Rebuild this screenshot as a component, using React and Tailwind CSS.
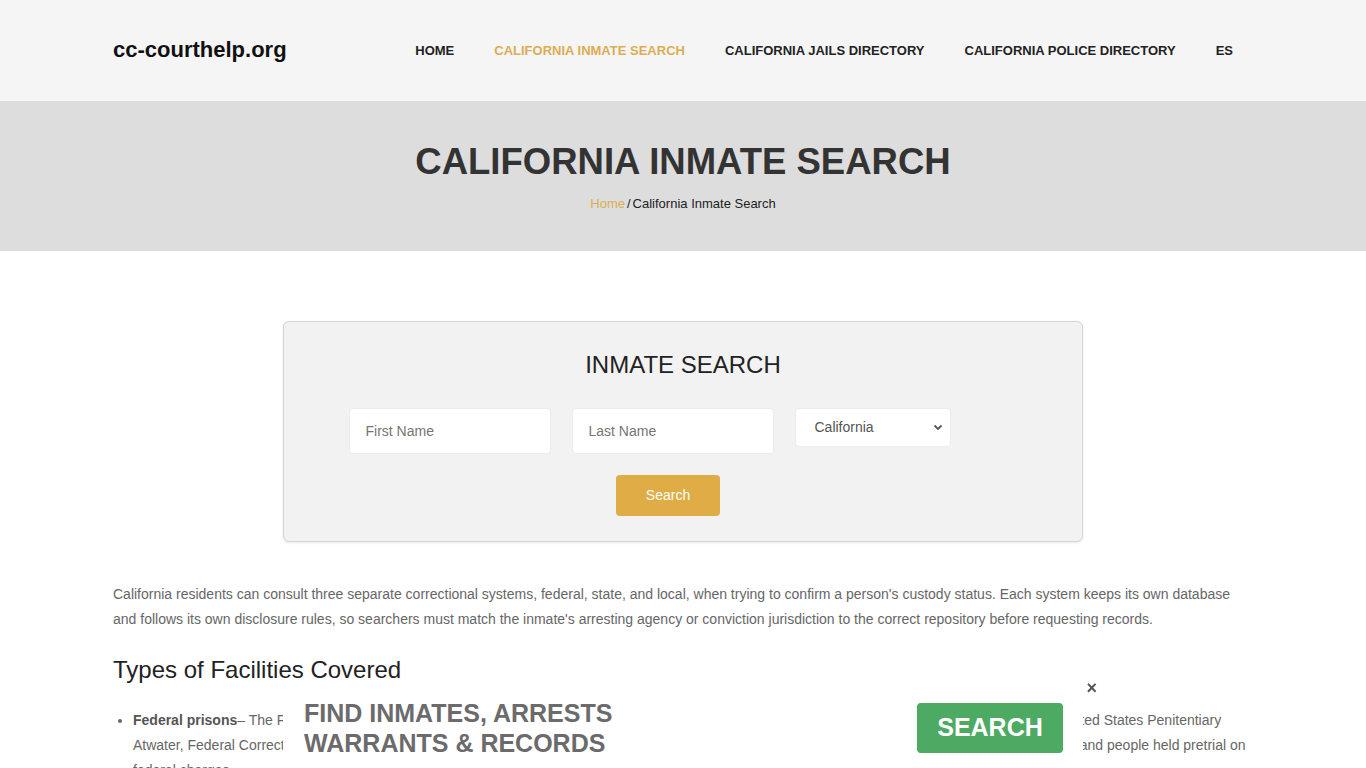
import React from "react";

const navItems = [
  { label: "HOME", active: false },
  { label: "CALIFORNIA INMATE SEARCH", active: true },
  { label: "CALIFORNIA JAILS DIRECTORY", active: false },
  { label: "CALIFORNIA POLICE DIRECTORY", active: false },
  { label: "ES", active: false },
];

export default function App() {
  return (
    <div className="min-h-screen bg-white text-[#222] font-['Liberation_Sans',Arial,sans-serif]">
      {/* Header */}
      <header className="bg-[#f5f5f5] h-[101px]">
        <div className="w-[1140px] mx-auto h-full flex items-center justify-between pb-px">
          <a className="text-[22px] font-bold text-[#111] leading-none">cc-courthelp.org</a>
          <nav className="flex items-center">
            {navItems.map((n) => (
              <a
                key={n.label}
                className={
                  "px-5 text-[13px] font-semibold leading-none " +
                  (n.active ? "text-[#dcad52]" : "text-[#222]")
                }
              >
                {n.label}
              </a>
            ))}
          </nav>
        </div>
      </header>

      {/* Hero */}
      <section className="bg-[#dddddd] h-[150px] flex flex-col items-center pt-[40px]">
        <h1 className="text-[36.5px] font-bold text-[#333] leading-[42px]">CALIFORNIA INMATE SEARCH</h1>
        <div className="mt-[13px] text-[13px] leading-[16px]">
          <span className="text-[#dcad52]">Home</span>
          <span className="text-[#222] px-[2px]">/</span>
          <span className="text-[#222]">California Inmate Search</span>
        </div>
      </section>

      {/* Search card */}
      <div className="w-[1140px] mx-auto pt-[70px]">
        <div className="w-[800px] mx-auto bg-[#f2f2f2] border border-[#d4d4d4] rounded-[6px] shadow-[0_1px_3px_rgba(0,0,0,0.08)] pt-[29px] pb-[25px]">
          <h2 className="text-center text-[24px] leading-[28px] text-[#222]">INMATE SEARCH</h2>
          <div className="mt-[29px] flex justify-center pr-[21px]">
            <div className="grid grid-cols-[202px_202px_202px] gap-[21px]">
              <input
                className="h-[46px] bg-white border border-[#ececec] rounded-[4px] pl-4 text-[14px] text-[#555] placeholder:text-[#757575] outline-none"
                placeholder="First Name"
              />
              <input
                className="h-[46px] bg-white border border-[#ececec] rounded-[4px] pl-4 text-[14px] text-[#555] placeholder:text-[#757575] outline-none"
                placeholder="Last Name"
              />
              <div className="relative w-[156px] h-[39px]">
                <select className="appearance-none w-full h-full bg-white border border-[#ececec] rounded-[4px] pl-[19px] text-[14px] text-[#555] outline-none">
                  <option>California</option>
                </select>
                <svg
                  className="absolute right-[8px] top-[16px] pointer-events-none"
                  width="10"
                  height="7"
                  viewBox="0 0 10 7"
                >
                  <path d="M1.5 1.5 L5 5 L8.5 1.5" fill="none" stroke="#555" strokeWidth="1.8" />
                </svg>
              </div>
            </div>
          </div>
          <div className="mt-[21px] flex justify-center pr-[30px]">
            <button className="w-[104px] h-[41px] bg-[#dfac45] rounded-[4px] text-white text-[14px]">Search</button>
          </div>
        </div>

        {/* Content */}
        <p className="mt-[40px] text-[14px] leading-[25px] text-[#666]">
          California residents can consult three separate correctional systems, federal, state, and local, when trying to confirm a person's custody status. Each system keeps its own database and follows its own disclosure rules, so searchers must match the inmate's arresting agency or conviction jurisdiction to the correct repository before requesting records.
        </p>
        <h2 className="mt-[23px] text-[24px] leading-[29px] text-[#222]">Types of Facilities Covered</h2>
        <ul className="mt-[24px] list-disc pl-5 text-[14px] leading-[25px] text-[#666] marker:text-[#666]">
          <li>
            <b className="text-[#555]">Federal prisons</b>– The Federal Bureau of Prisons operates multiple institutions in California, including Lompoc, Victorville, Herlong, Mendota, and the United States Penitentiary
            <br />
            Atwater, Federal Correctional Institution Dublin and Terminal Island, housing people sentenced for federal crimes in several distinct states and territories, and people held pretrial on
            <br />
            federal charges.
          </li>
        </ul>
        <div className="h-[80px]" />
      </div>

      {/* Bottom banner */}
      <div className="fixed bottom-0 left-1/2 -translate-x-1/2 w-[800px] h-[72px] bg-white flex justify-between pl-[21px] pr-[20px]">
        <div className="pt-[2px] text-[25px] leading-[30px] font-bold text-[#6b6b6b]">
          FIND INMATES, ARRESTS
          <br />
          WARRANTS &amp; RECORDS
        </div>
        <button className="mt-[7px] w-[146px] h-[50px] bg-[#4caa62] rounded-[4px] text-white text-[25px] font-bold">
          SEARCH
        </button>
        <span className="absolute right-[-14px] top-[-17px] text-[18px] leading-none font-bold text-[#555]">×</span>
      </div>
    </div>
  );
}
